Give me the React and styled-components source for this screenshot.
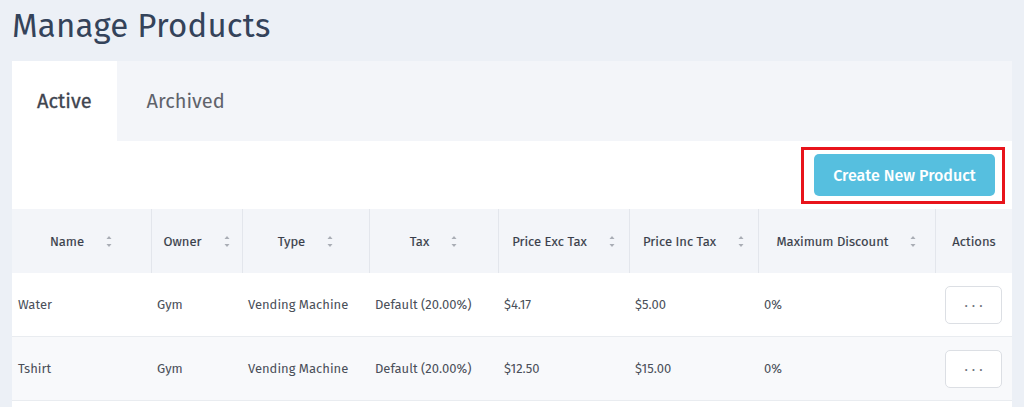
import React from "react";
import styled, { createGlobalStyle } from "styled-components";

const Global = createGlobalStyle`
  html, body { margin: 0; padding: 0; background: #ecf0f6; }
  body { font-family: "Fira Sans", "Lato", "Open Sans", sans-serif; overflow: hidden; }
  * { box-sizing: border-box; }
`;

const Page = styled.div`
  width: 1024px;
  height: 407px;
  padding: 0 12px 0 12px;
  overflow: hidden;
`;

const Title = styled.h1`
  margin: 0;
  height: 61px;
  padding-top: 4px;
  font-size: 33px;
  font-weight: 400;
  color: #34435a;
  letter-spacing: 0.2px;
  line-height: 44px;
`;

const Panel = styled.div`
  width: 1000px;
  background: #fff;
`;

const TabBar = styled.div`
  display: flex;
  height: 80px;
  background: #f3f5f9;
`;

const Tab = styled.div`
  display: flex;
  align-items: center;
  padding: 0 25px;
  font-size: 20px;
  font-weight: 400;
  -webkit-text-stroke: ${(p) => (p.$active ? "0.3px" : "0")};
  color: ${(p) => (p.$active ? "#3f4550" : "#5f636b")};
  background: ${(p) => (p.$active ? "#fff" : "transparent")};
  margin-right: ${(p) => (p.$active ? "5px" : "0")};
`;

const Toolbar = styled.div`
  display: flex;
  justify-content: flex-end;
  height: 68px;
  padding: 6px 7px 0 0;
`;

const Highlight = styled.div`
  border: 3px solid #e8141b;
  padding: 4px 7px 5px 10px;
  height: 57px;
`;

const PrimaryButton = styled.button`
  width: 181px;
  height: 42px;
  border: none;
  border-radius: 5px;
  background: #56bfdf;
  color: #fff;
  font-family: inherit;
  font-size: 16px;
  font-weight: 500;
  cursor: pointer;
`;

const Grid = styled.div`
  display: grid;
  grid-template-columns: 139px 91px 127px 129px 131px 129px 177px 77px;
`;

const HeadCell = styled.div`
  height: 64px;
  display: flex;
  align-items: center;
  justify-content: center;
  gap: 21px;
  background: #f3f5f9;
  border-left: ${(p) => (p.$first ? "none" : "1px solid #e3e6ec")};
  font-size: 13px;
  font-weight: 400;
  -webkit-text-stroke: 0.15px;
  color: #393e4a;
`;

const Cell = styled.div`
  height: 64px;
  display: flex;
  align-items: center;
  padding-left: 6px;
  font-size: 13px;
  color: #4a4f59;
  background: ${(p) => (p.$alt ? "#f8f9fb" : "#fff")};
  border-bottom: 1px solid #e9ecf0;
`;

const ActionCell = styled(Cell)`
  justify-content: center;
  padding-left: 0;
`;

const DotsButton = styled.button`
  width: 57px;
  height: 38px;
  border: 1px solid #dcdfe4;
  border-radius: 5px;
  background: #fff;
  color: #6b7079;
  font-family: inherit;
  font-size: 14px;
  letter-spacing: 4px;
  padding: 0 0 4px 4px;
`;

const SortIcon = () => (
  <svg width="8" height="18" viewBox="0 0 8 18">
    <path d="M4 4 L6.5 7 L1.5 7 Z" fill="#a9adb5" />
    <path d="M4 15 L6.5 12 L1.5 12 Z" fill="#a9adb5" />
  </svg>
);

const columns = [
  { label: "Name", sort: true },
  { label: "Owner", sort: true },
  { label: "Type", sort: true },
  { label: "Tax", sort: true },
  { label: "Price Exc Tax", sort: true },
  { label: "Price Inc Tax", sort: true },
  { label: "Maximum Discount", sort: true },
  { label: "Actions", sort: false },
];

const rows = [
  ["Water", "Gym", "Vending Machine", "Default (20.00%)", "$4.17", "$5.00", "0%"],
  ["Tshirt", "Gym", "Vending Machine", "Default (20.00%)", "$12.50", "$15.00", "0%"],
  ["", "", "", "", "", "", ""],
];

export default function App() {
  return (
    <Page>
      <Global />
      <Title>Manage Products</Title>
      <Panel>
        <TabBar>
          <Tab $active>Active</Tab>
          <Tab>Archived</Tab>
        </TabBar>
        <Toolbar>
          <Highlight>
            <PrimaryButton>Create New Product</PrimaryButton>
          </Highlight>
        </Toolbar>
        <Grid>
          {columns.map((c, i) => (
            <HeadCell key={c.label} $first={i === 0}>
              <span>{c.label}</span>
              {c.sort && <SortIcon />}
            </HeadCell>
          ))}
          {rows.map((r, ri) => (
            <React.Fragment key={ri}>
              {r.map((v, ci) => (
                <Cell key={ci} $alt={ri === 1}>{v}</Cell>
              ))}
              <ActionCell $alt={ri === 1}>
                {ri < 2 && <DotsButton>...</DotsButton>}
              </ActionCell>
            </React.Fragment>
          ))}
        </Grid>
      </Panel>
    </Page>
  );
}
